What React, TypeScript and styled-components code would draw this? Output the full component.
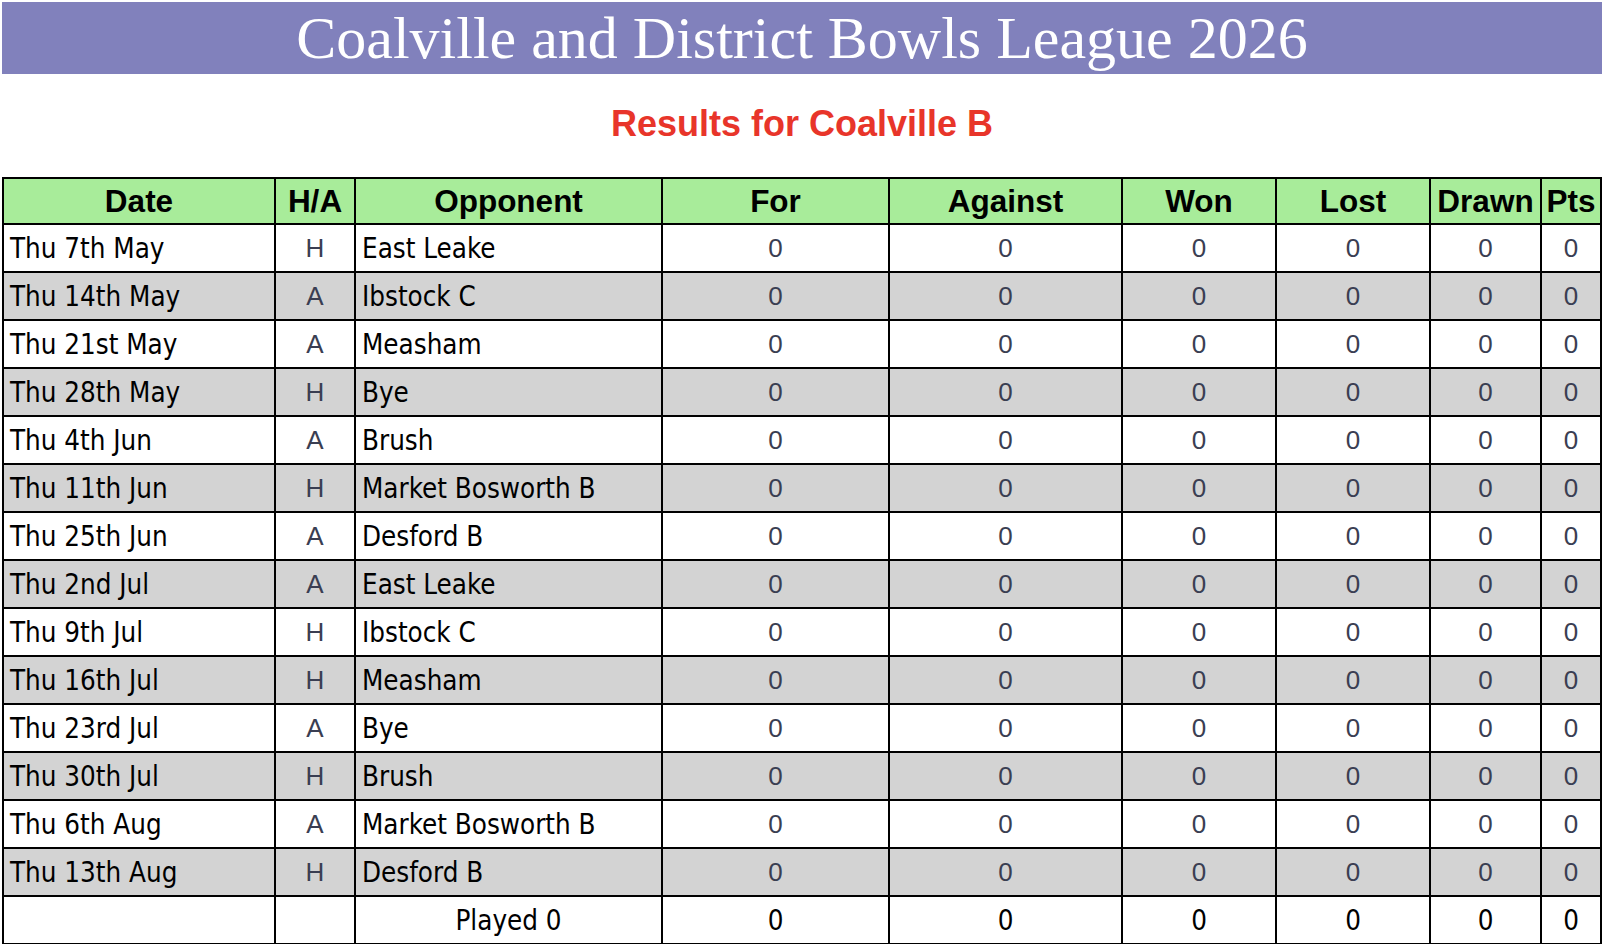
import React from 'react'
import styled, { createGlobalStyle } from 'styled-components'

const GlobalStyle = createGlobalStyle`
    html, body {
        margin: 0;
        padding: 0;
        background: #ffffff;
    }
`

type Fixture = { date: string; ha: 'H' | 'A'; opponent: string }

const fixtures: Fixture[] = [
    { date: 'Thu 7th May', ha: 'H', opponent: 'East Leake' },
    { date: 'Thu 14th May', ha: 'A', opponent: 'Ibstock C' },
    { date: 'Thu 21st May', ha: 'A', opponent: 'Measham' },
    { date: 'Thu 28th May', ha: 'H', opponent: 'Bye' },
    { date: 'Thu 4th Jun', ha: 'A', opponent: 'Brush' },
    { date: 'Thu 11th Jun', ha: 'H', opponent: 'Market Bosworth B' },
    { date: 'Thu 25th Jun', ha: 'A', opponent: 'Desford B' },
    { date: 'Thu 2nd Jul', ha: 'A', opponent: 'East Leake' },
    { date: 'Thu 9th Jul', ha: 'H', opponent: 'Ibstock C' },
    { date: 'Thu 16th Jul', ha: 'H', opponent: 'Measham' },
    { date: 'Thu 23rd Jul', ha: 'A', opponent: 'Bye' },
    { date: 'Thu 30th Jul', ha: 'H', opponent: 'Brush' },
    { date: 'Thu 6th Aug', ha: 'A', opponent: 'Market Bosworth B' },
    { date: 'Thu 13th Aug', ha: 'H', opponent: 'Desford B' },
]

const columns = [
    { label: 'Date', width: 272 },
    { label: 'H/A', width: 80 },
    { label: 'Opponent', width: 307 },
    { label: 'For', width: 227 },
    { label: 'Against', width: 233 },
    { label: 'Won', width: 154 },
    { label: 'Lost', width: 154 },
    { label: 'Drawn', width: 111 },
    { label: 'Pts', width: 60 },
]

const App = () => {
    return (
        <Page>
            <GlobalStyle />
            <Banner>Coalville and District Bowls League 2026</Banner>
            <Subtitle>Results for Coalville B</Subtitle>

            <Results>
                <colgroup>
                    {columns.map((c) => (
                        <col key={c.label} style={{ width: c.width }} />
                    ))}
                </colgroup>
                <thead>
                    <tr>
                        {columns.map((c) => (
                            <HeadCell key={c.label}>{c.label}</HeadCell>
                        ))}
                    </tr>
                </thead>
                <tbody>
                    {fixtures.map((f, i) => (
                        <Row key={f.date} $shaded={i % 2 === 1}>
                            <TextCell>{f.date}</TextCell>
                            <FigureCell>{f.ha}</FigureCell>
                            <TextCell>{f.opponent}</TextCell>
                            <FigureCell>0</FigureCell>
                            <FigureCell>0</FigureCell>
                            <FigureCell>0</FigureCell>
                            <FigureCell>0</FigureCell>
                            <FigureCell>0</FigureCell>
                            <FigureCell>0</FigureCell>
                        </Row>
                    ))}
                    <Row $shaded={false}>
                        <TextCell />
                        <TextCell />
                        <TotalCell>Played 0</TotalCell>
                        <TotalCell>0</TotalCell>
                        <TotalCell>0</TotalCell>
                        <TotalCell>0</TotalCell>
                        <TotalCell>0</TotalCell>
                        <TotalCell>0</TotalCell>
                        <TotalCell>0</TotalCell>
                    </Row>
                </tbody>
            </Results>
        </Page>
    )
}

export default App

const Page = styled.div`
    padding: 2px 6px 0 2px;
    width: 1600px;
`

const Banner = styled.h1`
    margin: 0;
    height: 72px;
    background: #8181bc;
    color: #ffffff;
    font-family: "Liberation Serif", "Times New Roman", serif;
    font-weight: normal;
    font-size: 60px;
    line-height: 72px;
    text-align: center;
`

const Subtitle = styled.h2`
    margin: 0;
    height: 103px;
    color: #e8352a;
    font-family: "Liberation Sans", Arial, sans-serif;
    font-weight: bold;
    font-size: 36px;
    line-height: 100px;
    text-align: center;
`

const Results = styled.table`
    width: 1600px;
    table-layout: fixed;
    border-collapse: collapse;
    border: 2px solid #000000;
`

const HeadCell = styled.th`
    height: 44px;
    padding: 0;
    background: #a8ec9a;
    border: 2px solid #000000;
    color: #000000;
    font-family: "Liberation Sans", Arial, sans-serif;
    font-weight: bold;
    font-size: 31.5px;
    text-align: center;
    white-space: nowrap;
`

const Row = styled.tr<{ $shaded: boolean }>`
    height: 48px;
    background: ${({ $shaded }) => ($shaded ? '#d3d3d3' : '#ffffff')};
`

const TextCell = styled.td`
    padding: 0 0 0 6px;
    border: 2px solid #000000;
    color: #000000;
    font-family: Tahoma, "DejaVu Sans Condensed", "DejaVu Sans", sans-serif;
    font-size: 27.5px;
    text-align: left;
    white-space: nowrap;
`

const FigureCell = styled.td`
    padding: 0;
    border: 2px solid #000000;
    color: #3a3e52;
    font-family: "Liberation Sans", Arial, sans-serif;
    font-size: 26px;
    text-align: center;
`

const TotalCell = styled.td`
    padding: 0;
    border: 2px solid #000000;
    color: #000000;
    font-family: Tahoma, "DejaVu Sans Condensed", "DejaVu Sans", sans-serif;
    font-size: 27.5px;
    text-align: center;
`
